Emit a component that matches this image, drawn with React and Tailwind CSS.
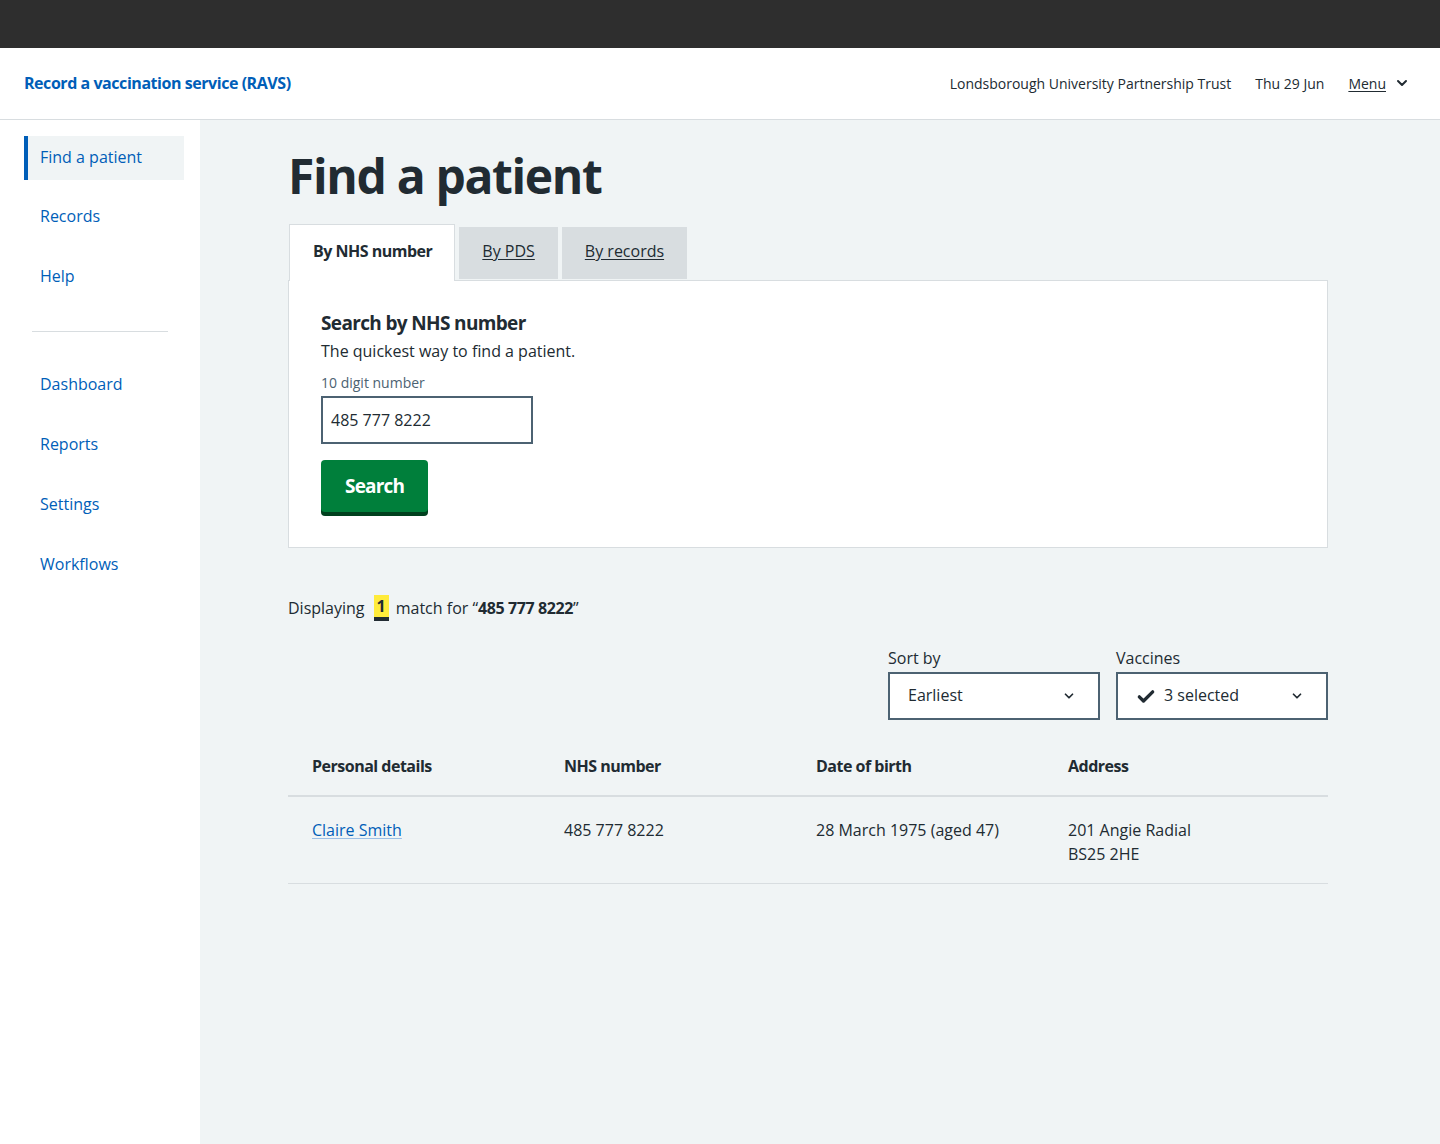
import React from "react";

const F = { fontFamily: '"Open Sans", "Noto Sans", Arial, sans-serif' };

function Chevron({ className = "" }) {
  return (
    <svg className={className} viewBox="0 0 24 24" fill="none" stroke="currentColor" strokeWidth="3" strokeLinecap="round" strokeLinejoin="round">
      <path d="M6 9l6 6 6-6" />
    </svg>
  );
}

function Tick() {
  return (
    <svg width="20" height="20" viewBox="0 0 24 24" fill="none" stroke="#212b32" strokeWidth="4" strokeLinecap="round" strokeLinejoin="round">
      <path d="M4 13l5 5L20 7" />
    </svg>
  );
}

const nav2 = ["Dashboard", "Reports", "Settings", "Workflows"];

export default function App() {
  return (
    <div style={F} className="min-h-[1144px] flex flex-col text-[#212b32] bg-[#f0f4f5]">
      <div className="h-[48px] bg-[#2e2e2e]" />
      <header className="h-[72px] bg-white border-b border-[#d8dde0] flex items-center justify-between pl-6 pr-[30px]">
        <a className="text-[16px] font-bold tracking-[-0.45px] text-[#005eb8] -mt-[1px]">Record a vaccination service (RAVS)</a>
        <div className="flex items-center text-[14px] -mt-[1px]">
          <span>Londsborough University Partnership Trust</span>
          <span className="ml-6">Thu 29 Jun</span>
          <span className="ml-6 underline underline-offset-2">Menu</span>
          <Chevron className="ml-2 w-[16px] h-[16px]" />
        </div>
      </header>
      <div className="flex flex-1">
        <aside className="w-[200px] bg-white pt-4 pl-6 pr-4">
          <div className="h-[44px] flex items-center bg-[#f0f4f5] border-l-4 border-[#005eb8] pl-3 pb-[3px] text-[16px] text-[#005eb8]">
            Find a patient
          </div>
          <div className="mt-[6px] h-[60px] flex items-center pl-4 text-[16px] text-[#005eb8]">Records</div>
          <div className="h-[60px] flex items-center pl-4 text-[16px] text-[#005eb8]">Help</div>
          <div className="ml-2 w-[136px] mt-[25px] mb-[22px] border-t border-[#d8dde0]" />
          {nav2.map((n) => (
            <div key={n} className="h-[60px] flex items-center pl-4 text-[16px] text-[#005eb8]">
              {n}
            </div>
          ))}
        </aside>
        <main className="flex-1 pl-[88px] pt-[28px]">
          <div className="w-[1040px]">
            <h1 className="text-[48px] leading-[56px] font-bold mb-[20px] tracking-[-1.35px]">Find a patient</h1>
            <div className="flex items-end gap-1 pl-px">
              <div className="relative z-10 -mb-px h-[57px] pl-[23px] pr-[22px] pb-[5px] flex items-center bg-white border border-b-0 border-[#d8dde0] text-[16px] font-bold tracking-[-0.5px]">
                By NHS number
              </div>
              <div className="h-[52px] mb-px px-[23px] pb-[5px] flex items-center bg-[#d8dde0] text-[16px] underline underline-offset-2 text-[#212b32]">By PDS</div>
              <div className="h-[52px] mb-px px-[23px] pb-[5px] flex items-center bg-[#d8dde0] text-[16px] underline underline-offset-2 text-[#212b32]">By records</div>
            </div>
            <section className="bg-white border border-[#d8dde0] px-8 pt-[28px] pb-[35px]">
              <h2 className="text-[19px] leading-[28px] font-bold tracking-[-0.65px]">Search by NHS number</h2>
              <p className="text-[16px] leading-[28px]">The quickest way to find a patient.</p>
              <label className="block mt-[6px] text-[14px] leading-[24px] text-[#4c6272]">10 digit number</label>
              <div className="mt-[1px] w-[212px] h-[48px] border-2 border-[#4c6272] flex items-center px-[8px] text-[16px]">485 777 8222</div>
              <button className="mt-4 h-[52px] px-6 bg-[#007f3b] text-white text-[19px] font-bold tracking-[-0.8px] rounded-[4px] shadow-[0_4px_0_#00401e]">
                Search
              </button>
            </section>
            <p className="mt-[47px] text-[16px] leading-[24px] flex items-center">
              Displaying
              <span className="ml-[9px] mr-[7px] px-[3px] bg-[#ffeb3b] font-bold border-b-4 border-[#212b32] leading-[22px]">1</span>
              match for “<b className="tracking-[-0.4px]">485 777 8222</b>”
            </p>
            <div className="mt-[25px] flex justify-end gap-4">
              {[
                ["Sort by", "Earliest", false],
                ["Vaccines", "3 selected", true],
              ].map(([l, v, t]) => (
                <div key={l} className="w-[212px]">
                  <div className="text-[16px] leading-[24px] mb-[2px]">{l}</div>
                  <div className="h-[48px] border-2 border-[#4c6272] bg-white flex items-center pl-[18px] pr-[22px] text-[16px]">
                    {t && <span className="mr-2"><Tick /></span>}
                    <span className="flex-1 -mt-[2px]">{v}</span>
                    <Chevron className="w-[14px] h-[14px]" />
                  </div>
                </div>
              ))}
            </div>
            <table className="w-full text-[16px] border-collapse">
              <thead>
                <tr className="border-b-2 border-[#d8dde0]">
                  {["Personal details", "NHS number", "Date of birth", "Address"].map((h, i) => (
                    <th key={h} className={`text-left font-bold tracking-[-0.5px] px-6 h-[76px] pb-[17px] leading-[24px] align-bottom ${i < 3 ? "w-[252px]" : ""}`}>{h}</th>
                  ))}
                </tr>
              </thead>
              <tbody>
                <tr className="border-b border-[#d8dde0] align-top leading-[24px]">
                  <td className="px-6 pt-[21px] pb-[17px]"><a className="text-[#005eb8] underline underline-offset-2 decoration-[#9cbfe6]">Claire Smith</a></td>
                  <td className="px-6 pt-[21px]">485 777 8222</td>
                  <td className="px-6 pt-[21px]">28 March 1975 (aged 47)</td>
                  <td className="px-6 pt-[21px] pb-[17px]">201 Angie Radial<br />BS25 2HE</td>
                </tr>
              </tbody>
            </table>
          </div>
        </main>
      </div>
    </div>
  );
}
